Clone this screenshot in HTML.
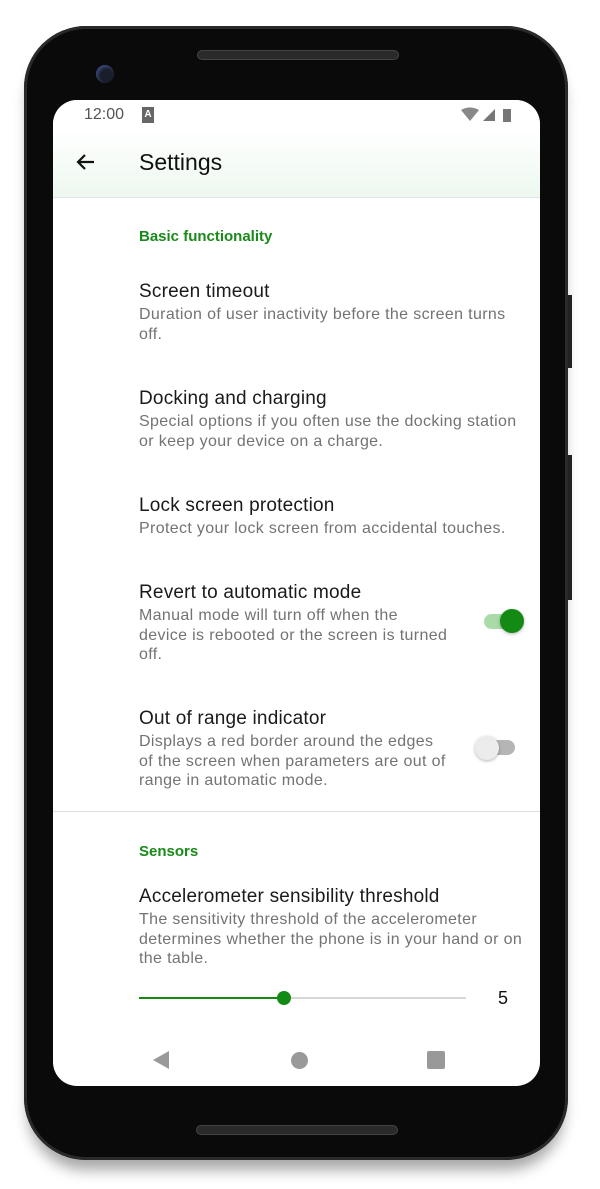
<!DOCTYPE html>
<html><head><style>
body{margin:0;width:600px;height:1189px;background:#fff;position:relative;overflow:hidden;font-family:"Liberation Sans",sans-serif;}
.phone{position:absolute;left:24px;top:26px;width:544px;height:1134px;background:#0a0a0a;border-radius:62px;box-shadow:0 14px 14px -4px rgba(0,0,0,.35),inset 0 0 0 3px #2a2a2a;}
.btn{position:absolute;background:#222;width:4px;left:568px;}
.screen{position:absolute;left:53px;top:100px;width:487px;height:986px;background:#fff;border-radius:24px;overflow:hidden;}
.spk{position:absolute;background:#2a2a2a;border:1px solid #444;border-radius:5px;height:8px;}
.t{position:absolute;left:86px;font-size:19px;color:#1a1a1a;white-space:nowrap;letter-spacing:.2px}
.s{position:absolute;left:86px;font-size:16px;color:#737373;line-height:19.5px;white-space:nowrap;letter-spacing:.35px}
.c{position:absolute;left:86px;font-size:15px;color:#1a8a1a;font-weight:bold;}
</style></head><body>
<div class="phone"></div>
<div class="btn" style="top:295px;height:73px"></div>
<div class="btn" style="top:455px;height:145px"></div>
<div class="spk" style="left:197px;top:50px;width:200px"></div>
<div class="spk" style="left:196px;top:1125px;width:200px"></div>
<div style="position:absolute;left:96px;top:65px;width:18px;height:18px;border-radius:50%;background:#1a1d2a;box-shadow:inset 2px 2px 3px #3a4a7a"></div>
<div class="screen">
 <div style="position:absolute;left:0;top:0;width:487px;height:97px;background:linear-gradient(#fff 30%,#edf8ef);border-bottom:1px solid #e4e4e4"></div>
 <div style="position:absolute;left:31px;top:6px;font-size:16px;color:#555">12:00</div>
 <div style="position:absolute;left:89px;top:7px;width:12px;height:16px;background:#666;color:#fff;font-size:10px;text-align:center;line-height:16px;font-weight:bold">A</div>
 <svg style="position:absolute;left:408px;top:7px" width="60" height="16"><path d="M0 3 Q9 -2 18 3 L9 14Z" fill="#888"/><path d="M22 14 L34 2 L34 14Z" fill="#777"/><rect x="42" y="2" width="8" height="13" fill="#777"/></svg>
 <svg style="position:absolute;left:22px;top:52px" width="22" height="20"><path d="M19 10 H3 M10 3 L3 10 L10 17" stroke="#111" stroke-width="2.2" fill="none"/></svg>
 <div style="position:absolute;left:86px;top:49px;font-size:23px;color:#111">Settings</div>
 <div class="c" style="top:128px">Basic functionality</div>
 <div class="t" style="top:181px">Screen timeout</div>
 <div class="s" style="top:205px">Duration of user inactivity before the screen turns<br>off.</div>
 <div class="t" style="top:288px">Docking and charging</div>
 <div class="s" style="top:312px">Special options if you often use the docking station<br>or keep your device on a charge.</div>
 <div class="t" style="top:395px">Lock screen protection</div>
 <div class="s" style="top:419px">Protect your lock screen from accidental touches.</div>
 <div class="t" style="top:482px">Revert to automatic mode</div>
 <div class="s" style="top:506px">Manual mode will turn off when the<br>device is rebooted or the screen is turned<br>off.</div>
 <div style="position:absolute;left:431px;top:514px;width:34px;height:15px;border-radius:8px;background:#a9dba9"></div>
 <div style="position:absolute;left:447px;top:509px;width:24px;height:24px;border-radius:50%;background:#138a13;box-shadow:0 1px 3px rgba(0,0,0,.3)"></div>
 <div class="t" style="top:608px">Out of range indicator</div>
 <div class="s" style="top:632px">Displays a red border around the edges<br>of the screen when parameters are out of<br>range in automatic mode.</div>
 <div style="position:absolute;left:428px;top:640px;width:34px;height:15px;border-radius:8px;background:#b5b5b5"></div>
 <div style="position:absolute;left:422px;top:636px;width:24px;height:24px;border-radius:50%;background:#ececec;box-shadow:0 1px 3px rgba(0,0,0,.3)"></div>
 <div style="position:absolute;left:0;top:711px;width:487px;height:1px;background:#ddd"></div>
 <div class="c" style="top:743px">Sensors</div>
 <div class="t" style="top:786px">Accelerometer sensibility threshold</div>
 <div class="s" style="top:810px">The sensitivity threshold of the accelerometer<br>determines whether the phone is in your hand or on<br>the table.</div>
 <div style="position:absolute;left:86px;top:897px;width:327px;height:2px;background:#d6d6d6"></div>
 <div style="position:absolute;left:86px;top:897px;width:145px;height:2px;background:#138a13"></div>
 <div style="position:absolute;left:224px;top:891px;width:14px;height:14px;border-radius:50%;background:#138a13"></div>
 <div style="position:absolute;left:445px;top:888px;font-size:18px;color:#111">5</div>
 <svg style="position:absolute;left:98px;top:950px" width="20" height="20"><path d="M18 1 L2 10 L18 19Z" fill="#999"/></svg>
 <div style="position:absolute;left:238px;top:952px;width:17px;height:17px;border-radius:50%;background:#999"></div>
 <div style="position:absolute;left:374px;top:951px;width:18px;height:18px;border-radius:2px;background:#999"></div>
</div>
</body></html>
